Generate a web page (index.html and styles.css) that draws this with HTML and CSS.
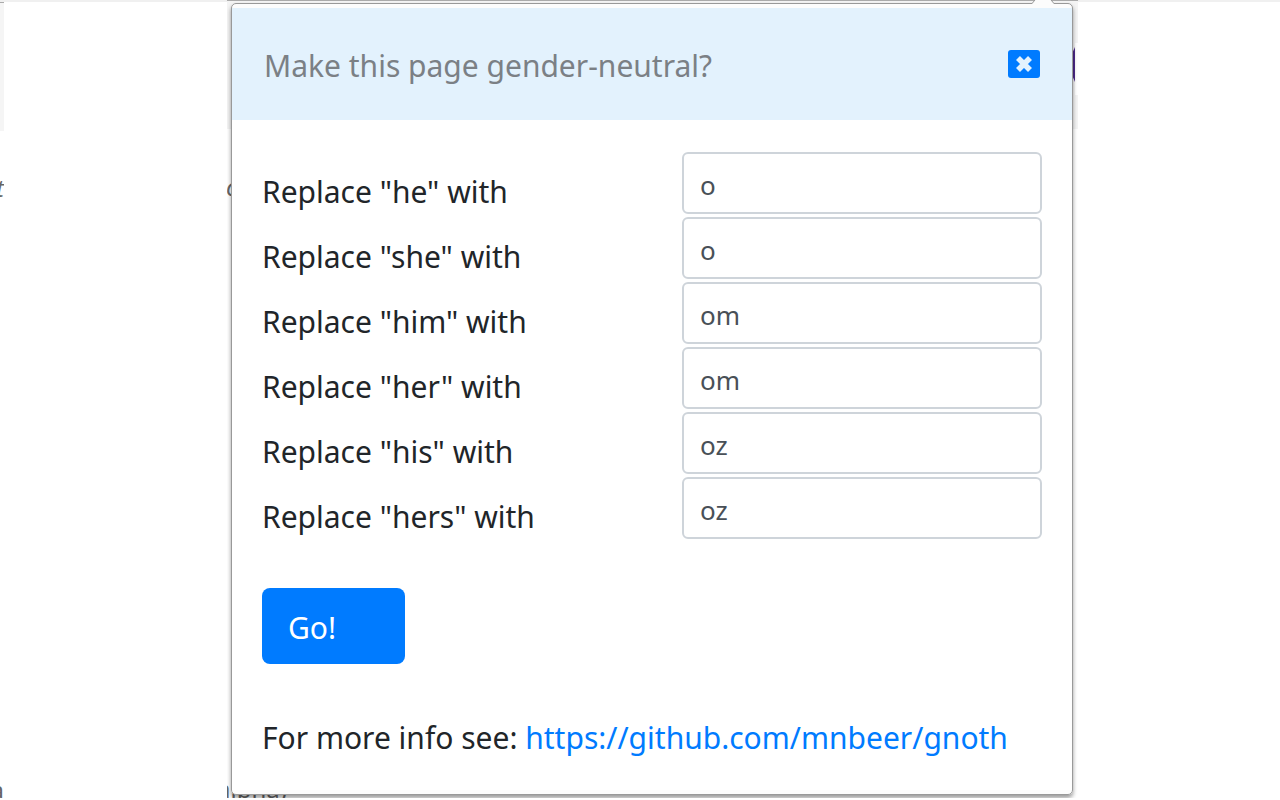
FILE: index.html
```html
<!DOCTYPE html>
<html lang="en">
<head>
  <meta charset="UTF-8">
  <meta name="viewport" content="width=device-width, initial-scale=1.0">
  <title>Gnoth</title>
  <link rel="stylesheet" href="styles.css">
</head>
<body>
  <div class="page">
    <div class="edge">
      <div class="edge-band"></div>
      <span class="behind behind-t">t</span>
      <span class="behind behind-a">a</span>
    </div>

    <div class="stage">
      <!-- Page behind the popup -->
      <div class="stage-band"></div>
      <svg class="stage-tab" width="6" height="52" viewBox="0 0 6 52">
        <path d="M3 0 H6 V52 H3 Z" fill="#fff"/>
        <path d="M3 4 Q0 9 0 14 V28 Q0 34 3 39 Z" fill="#4c2889"/>
      </svg>
      <span class="behind behind-o">o</span>
      <span class="behind behind-alpha">alpha)</span>

      <main class="popup">
        <svg class="arrow" width="24" height="5" viewBox="0 0 24 5">
          <path d="M0 5 L4 0 H20 L24 5 Z" fill="#fcfcfc"/>
          <path d="M0 3.5 H1 L4 0 M20 0 L23 3.5 H24" fill="none" stroke="#999"/>
        </svg>
        <header class="header">
          <h1 class="title">Make this page gender-neutral?</h1>
          <button class="close" type="button" aria-label="Close">
            <svg width="20" height="20" viewBox="0 0 20 20">
              <path d="M4 4 L16 16 M16 4 L4 16" stroke="#e3f2fd" stroke-width="5.6" stroke-linecap="butt"/>
            </svg>
          </button>
        </header>
        <form class="form">
          <div class="row">
            <label for="he">Replace "he" with</label>
            <input type="text" id="he" value="o">
          </div>
          <div class="row">
            <label for="she">Replace "she" with</label>
            <input type="text" id="she" value="o">
          </div>
          <div class="row">
            <label for="him">Replace "him" with</label>
            <input type="text" id="him" value="om">
          </div>
          <div class="row">
            <label for="her">Replace "her" with</label>
            <input type="text" id="her" value="om">
          </div>
          <div class="row">
            <label for="his">Replace "his" with</label>
            <input type="text" id="his" value="oz">
          </div>
          <div class="row">
            <label for="hers">Replace "hers" with</label>
            <input type="text" id="hers" value="oz">
          </div>
          <button class="btn" type="button">Go!</button>
          <p class="info">For more info see: <a href="https://github.com/mnbeer/gnoth">https://github.com/mnbeer/gnoth</a></p>
        </form>
      </main>
    </div>
  </div>
</body>
</html>
```

FILE: styles.css
```css
* {
  box-sizing: border-box;
}
body {
  margin: 0;
  background-color: #fff;
  color: #212529;
  font-family: "Noto Sans", "Open Sans", sans-serif;
  font-size: 30px;
  line-height: 48px;
}
.page {
  display: grid;
  grid-template-columns: 4px minmax(0, 851fr);
  column-gap: 223px;
  padding-right: 202px;
  border-top: 2px solid #f0f0f0;
  margin-bottom: -2px;
}
.edge, .stage {
  position: relative;
  overflow: hidden;
  margin-top: -2px;
}
.edge-band {
  height: 131px;
  border-top: 2px solid #f0f0f0;
  background-color: #f5f5f5;
  box-shadow: inset 0 1px #aaa;
}
.stage {
  padding: 3px 5px 5px 4px;
}
.stage-band {
  position: absolute;
  inset: 0 0 auto 0;
  height: 129px;
  border-top: 1px solid #aaa;
  background-color: #f4f4f4;
}
.stage-tab {
  position: absolute;
  top: 43px;
  right: 0;
}
.behind {
  position: absolute;
  color: #666;
  font-size: 24px;
  line-height: 28px;
}
.behind-t {
  top: 174px;
  right: 0;
  font-style: italic;
}
.behind-a {
  top: 776px;
  right: 0;
}
.behind-o {
  top: 173px;
  left: -1px;
  font-style: italic;
}
.behind-alpha {
  top: 775px;
  left: -10px;
}
.popup {
  position: relative;
  padding: 4px 0;
  border: 1px solid #999;
  border-radius: 5px;
  background: linear-gradient(#fcfcfc 4px, #fff 4px, #fff calc(100% - 4px), #fcfcfc calc(100% - 4px));
  box-shadow: 0 3px 4px rgba(0, 0, 0, 0.4);
}
.arrow {
  position: absolute;
  top: -4px;
  right: 17px;
}
.header {
  display: flex;
  align-items: center;
  justify-content: space-between;
  height: 112px;
  padding: 0 32px;
  background-color: #e3f2fd;
}
.title {
  margin: 0;
  padding-top: 4px;
  color: #7b8085;
  font-size: 30px;
  font-weight: 400;
}
.close {
  display: flex;
  align-items: center;
  justify-content: center;
  width: 32px;
  height: 28px;
  padding: 0;
  border: 0;
  border-radius: 3px;
  background-color: #007bff;
  cursor: pointer;
}
.form {
  padding: 32px 30px 28px;
}
.row {
  display: grid;
  grid-template-columns: 7fr 6fr;
  margin-bottom: 3px;
}
.row label {
  padding-top: 16px;
  height: 62px;
}
.row input {
  width: 100%;
  height: 62px;
  padding: 4px 16px 0;
  border: 2px solid #ced4da;
  border-radius: 6px;
  background-color: #fff;
  color: #495057;
  font-family: inherit;
  font-size: 26px;
}
.btn {
  width: 143px;
  height: 76px;
  margin-top: 46px;
  padding: 2px 26px 0;
  border: 0;
  border-radius: 8px;
  background-color: #007bff;
  color: #fff;
  font-family: inherit;
  font-size: 30px;
  text-align: left;
  cursor: pointer;
}
.info {
  margin: 50px 0 0;
}
.info a {
  color: #007bff;
  text-decoration: none;
}
```
